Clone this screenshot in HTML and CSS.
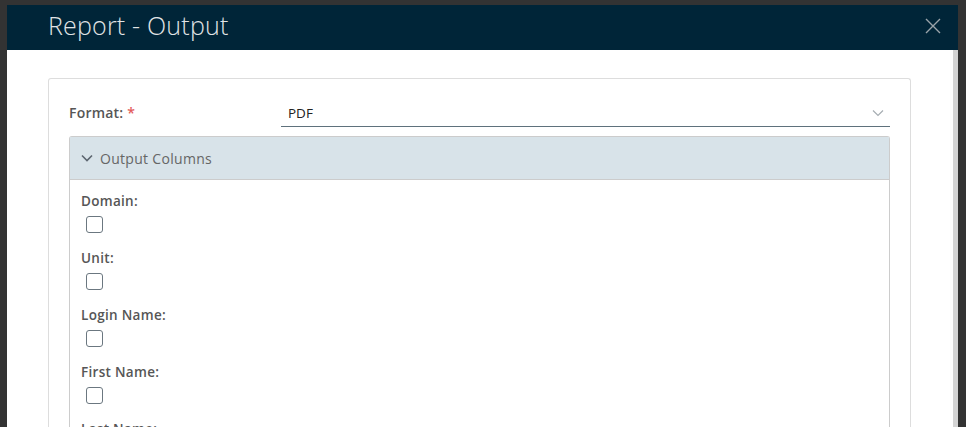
FILE: index.html
```html
<!DOCTYPE html>
<html lang="en">
  <head>
    <meta charset="UTF-8" />
    <title>Report - Output</title>
    <link rel="stylesheet" href="styles.css">
  </head>
  <body>
    <div class="modal">
      <!-- Title bar -->
      <div class="modal-header">
        <h3 class="modal-title">Report - Output</h3>
        <button class="close" aria-label="Close">
          <svg width="16" height="16" viewBox="0 0 16 16">
            <path d="M1 1 L15 15 M15 1 L1 15" stroke="#9aa4aa" stroke-width="1.4" fill="none" />
          </svg>
        </button>
      </div>

      <div class="modal-body">
        <div class="content">
          <div class="card">
            <div class="form-row">
              <label class="form-label">Format: <span class="required">*</span></label>
              <div class="select">
                <span>PDF</span>
                <svg width="12" height="8" viewBox="0 0 12 8">
                  <path d="M1 1.5 L6 6.5 L11 1.5" stroke="#a6adb2" stroke-width="1.2" fill="none" />
                </svg>
              </div>
            </div>

            <!-- Output columns panel -->
            <div class="panel">
              <div class="panel-header">
                <svg width="12" height="8" viewBox="0 0 12 8">
                  <path d="M1 1.5 L6 6.5 L11 1.5" stroke="#5d6670" stroke-width="1.6" fill="none" />
                </svg>
                <span>Output Columns</span>
              </div>
              <div class="panel-body">
                <div class="field">
                  <label class="field-label">Domain:</label>
                  <input type="checkbox" class="check" />
                </div>
                <div class="field">
                  <label class="field-label">Unit:</label>
                  <input type="checkbox" class="check" />
                </div>
                <div class="field">
                  <label class="field-label">Login Name:</label>
                  <input type="checkbox" class="check" />
                </div>
                <div class="field">
                  <label class="field-label">First Name:</label>
                  <input type="checkbox" class="check" />
                </div>
                <div class="field">
                  <label class="field-label">Last Name:</label>
                  <input type="checkbox" class="check" />
                </div>
              </div>
            </div>
          </div>
        </div>
        <div class="scrollbar"></div>
      </div>
    </div>
  </body>
</html>
```

FILE: styles.css
```css
body {
  font-family: "Open Sans", Arial, sans-serif;
  margin: 0;
  background-color: #333333;
  height: 427px;
  overflow: hidden;
}

.modal {
  margin: 5px 8px 0 7px;
  background-color: #ffffff;
}

.modal-header {
  background-color: #002538;
  height: 45px;
  display: flex;
  align-items: center;
  justify-content: space-between;
  padding: 0 17px 0 41px;
}

.modal-title {
  margin: -5px 0 0 0;
  font-size: 25px;
  font-weight: 300;
  color: #e1e4e6;
  letter-spacing: 0.2px;
}

.close {
  background: none;
  border: none;
  padding: 0;
  cursor: pointer;
  display: flex;
  margin-top: -4px;
}

.modal-body {
  display: flex;
  height: 380px;
  overflow: hidden;
}

.content {
  flex: 1;
  padding: 28px 42px 0 41px;
}

.scrollbar {
  width: 5px;
  background-color: #d4d4d4;
}

.card {
  border: 1px solid #dddddd;
  border-bottom: none;
  border-radius: 3px 3px 0 0;
  padding: 20px 20px 0 20px;
  height: 360px;
}

.form-row {
  display: flex;
  align-items: flex-end;
  height: 28px;
}

.form-label {
  width: 212px;
  font-size: 14px;
  font-weight: 600;
  color: #565656;
  align-self: center;
  margin-top: -2px;
  letter-spacing: 0.2px;
}

.required {
  color: #e35c5c;
}

.select {
  flex: 1;
  display: flex;
  justify-content: space-between;
  align-items: center;
  border-bottom: 1px solid #5f717c;
  padding: 0 6px 4px 7px;
  font-size: 13.5px;
  color: #222222;
}

.panel {
  margin-top: 9px;
  border: 1px solid #cccccc;
  border-radius: 3px 3px 0 0;
  border-bottom: none;
}

.panel-header {
  background-color: #d8e3e9;
  height: 42px;
  border-bottom: 1px solid #cccccc;
  display: flex;
  align-items: center;
  gap: 7px;
  padding-left: 11px;
  font-size: 14px;
  letter-spacing: 0.3px;
  color: #666666;
}

.panel-body {
  padding: 13px 11px 0 11px;
}

.field {
  display: flex;
  flex-direction: column;
  align-items: flex-start;
  margin-bottom: 17px;
}

.field-label {
  font-size: 13.5px;
  font-weight: 600;
  color: #565656;
  line-height: 17px;
  letter-spacing: 0.3px;
}

.check {
  appearance: none;
  width: 17px;
  height: 17px;
  margin: 6px 0 0 5px;
  border: 1px solid #6b7780;
  border-radius: 3px;
  background-color: #ffffff;
}
```
